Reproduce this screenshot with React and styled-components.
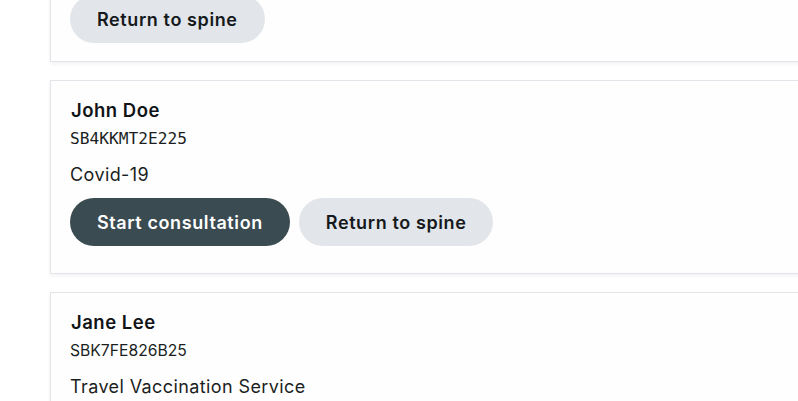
import React from 'react';
import styled, { createGlobalStyle } from 'styled-components';

const GlobalStyle = createGlobalStyle`
  html, body {
    margin: 0;
    padding: 0;
    background: #ffffff;
    overflow: hidden;
  }
  body {
    font-family: Inter, "DejaVu Sans", sans-serif;
    color: #1b1f22;
  }
`;

const patients = [
  { name: 'Sam Patel', id: 'SB9QPL31X204', mono: true, service: 'Minor Illness', canStart: false, bottom: 18 },
  { name: 'John Doe', id: 'SB4KKMT2E225', mono: true, service: 'Covid-19', canStart: true, bottom: 27 },
  { name: 'Jane Lee', id: 'SBK7FE826B25', mono: false, service: 'Travel Vaccination Service', canStart: true, bottom: 27 },
];

function App() {
  return (
    <>
      <GlobalStyle />
      <List>
        {patients.map((p) => (
          <Card key={p.id} $bottom={p.bottom}>
            <Name>{p.name}</Name>
            <Ref $mono={p.mono}>{p.id}</Ref>
            <Service>{p.service}</Service>
            <Actions>
              {p.canStart && <Button $primary>Start consultation</Button>}
              <Button>Return to spine</Button>
            </Actions>
          </Card>
        ))}
      </List>
    </>
  );
}

const List = styled.div`
  display: flex;
  flex-direction: column;
  gap: 18px;
  margin-top: -123px;
  padding-left: 50px;
`;

const Card = styled.div`
  width: 800px;
  background: #fefefe;
  border: 1px solid #e1e4e9;
  box-shadow: 0 2px 4px rgba(30, 40, 60, 0.06);
  padding: 17px 19px ${(p) => p.$bottom}px;
  display: flex;
  flex-direction: column;
`;

const Name = styled.div`
  font-size: 18.5px;
  font-weight: 600;
  letter-spacing: 0.5px;
  line-height: 24px;
  padding-left: 1px;
  color: #111417;
`;

const Ref = styled.div`
  margin-top: 6px;
  font-family: ${(p) => (p.$mono ? '"DejaVu Sans Mono", "Liberation Mono", monospace' : 'Inter, "DejaVu Sans", sans-serif')};
  font-size: ${(p) => (p.$mono ? '16.2px' : '15.7px')};
  line-height: 22px;
  color: #1b1f22;
`;

const Service = styled.div`
  margin-top: 13px;
  font-size: 18px;
  letter-spacing: 0.4px;
  line-height: 24px;
  color: #1b1f22;
`;

const Actions = styled.div`
  margin-top: 11px;
  display: flex;
  gap: 9px;
`;

const Button = styled.button`
  height: 48px;
  padding: 0 27px;
  border: none;
  border-radius: 24px;
  font-family: Inter, "DejaVu Sans", sans-serif;
  font-size: 18px;
  font-weight: 600;
  letter-spacing: 0.6px;
  cursor: pointer;
  background: ${(p) => (p.$primary ? '#3a4b51' : '#e2e5ea')};
  color: ${(p) => (p.$primary ? '#ffffff' : '#15191c')};
`;

export default App;
